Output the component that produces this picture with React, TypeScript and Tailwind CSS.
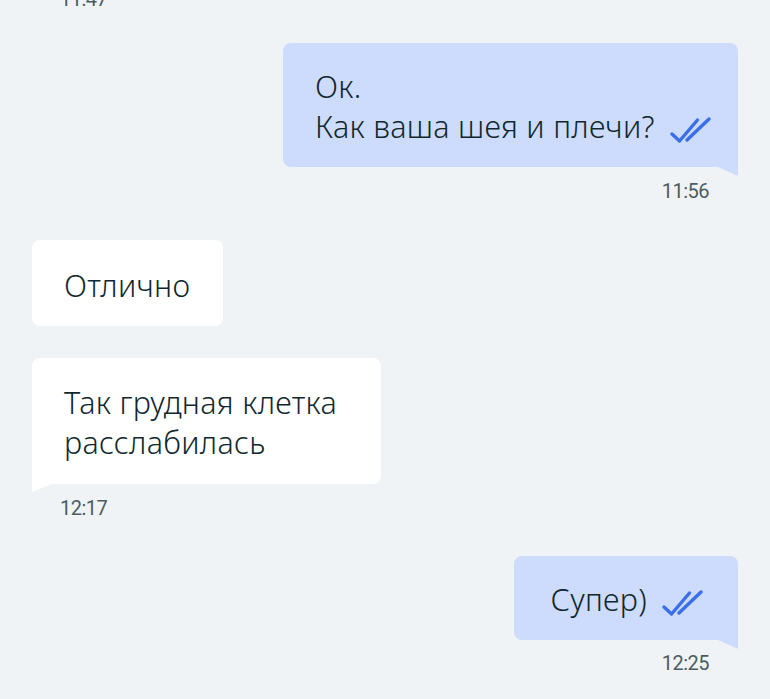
const font = { fontFamily: '"Noto Sans", "Open Sans", sans-serif' }

function Check() {
  return (
    <svg width="44" height="28" viewBox="0 0 44 28" className="inline-block ml-[14px] -mb-[2px]" fill="none">
      <path d="M3 17 L10.5 24 L28.5 3" stroke="#3b6fe9" strokeWidth="3.4" strokeLinecap="round" strokeLinejoin="round" />
      <path d="M18 23 L40 2" stroke="#3b6fe9" strokeWidth="3.4" strokeLinecap="round" strokeLinejoin="round" />
    </svg>
  )
}

function Time({ t, right }: { t: string; right?: boolean }) {
  return (
    <div
      style={{ fontFamily: 'Roboto, "Noto Sans", sans-serif' }}
      className={`h-6 leading-6 text-[20px] tracking-[-0.5px] text-[#4d5c61] ${right ? 'text-right pr-[29px]' : 'pl-7'}`}
    >
      {t}
    </div>
  )
}

function Out({ children, w }: { children: React.ReactNode; w: string }) {
  return (
    <div className={`relative ml-auto ${w} bg-[#cddbfc] rounded-lg rounded-br-none px-8 text-[30.5px] tracking-[0.3px] font-light leading-[40px] text-[#10282d]`}>
      {children}
      <svg width="20" height="9" viewBox="0 0 20 9" className="absolute right-0 top-full">
        <path d="M0 0 H20 V8 Q20 9 19 8.6 Z" fill="#cddbfc" />
      </svg>
    </div>
  )
}

function In({ children, w, tail }: { children: React.ReactNode; w: string; tail?: boolean }) {
  return (
    <div className={`relative ${w} bg-white rounded-lg ${tail ? 'rounded-bl-none' : ''} px-8 text-[30.5px] tracking-[0.3px] font-light leading-[40px] text-[#10282d]`}>
      {children}
      {tail && (
        <svg width="20" height="8" viewBox="0 0 20 8" className="absolute left-0 top-full">
          <path d="M0 0 H20 L1 7.6 Q0 8 0 7 Z" fill="#ffffff" />
        </svg>
      )}
    </div>
  )
}

export default function App() {
  return (
    <div style={font} className="w-[770px] h-[699px] overflow-hidden bg-[#f0f3f5] px-8 flex flex-col">
      <div className="-mt-[13px]">
        <Time t="11:47" />
      </div>
      <div className="mt-8">
        <Out w="w-[455px]">
          <div className="pt-[23px] pb-[21px]">
            <div>Ок.</div>
            <div className="whitespace-nowrap">
              Как ваша шея и плечи?
              <Check />
            </div>
          </div>
        </Out>
      </div>
      <div className="mt-3">
        <Time t="11:56" right />
      </div>
      <div className="mt-[37px]">
        <In w="w-[191px]">
          <div className="pt-[25px] pb-[21px]">Отлично</div>
        </In>
      </div>
      <div className="mt-8">
        <In w="w-[349px]" tail>
          <div className="pt-[24px] pb-[22px]">
            <div>Так грудная клетка</div>
            <div>расслабилась</div>
          </div>
        </In>
      </div>
      <div className="mt-3">
        <Time t="12:17" />
      </div>
      <div className="mt-9">
        <Out w="w-[224px]">
          <div className="pt-[23px] pb-[21px] text-right pr-[1px] whitespace-nowrap">
            Супер)
            <Check />
          </div>
        </Out>
      </div>
      <div className="mt-[11px]">
        <Time t="12:25" right />
      </div>
    </div>
  )
}
